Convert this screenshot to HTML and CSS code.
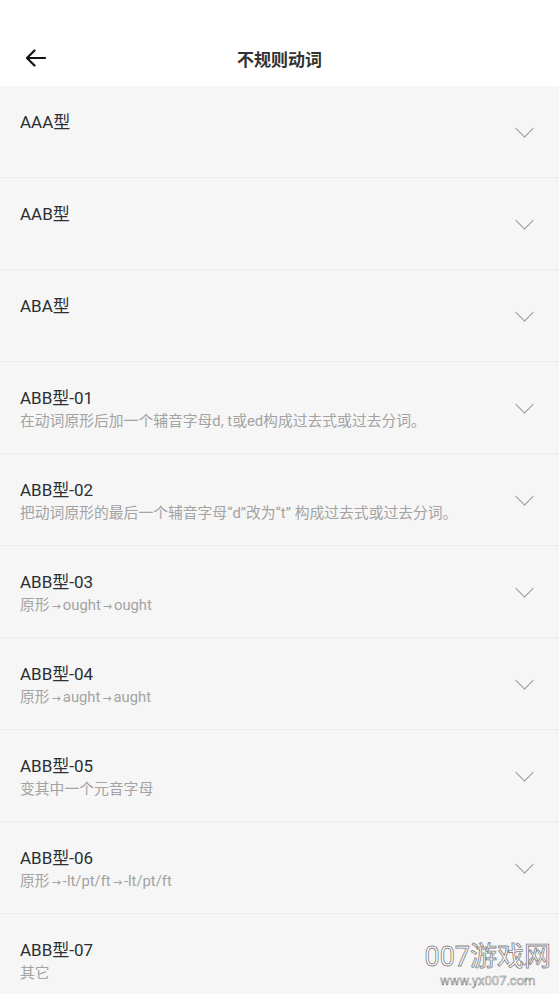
FILE: index.html
```html
<!DOCTYPE html>
<html>
<head>
  <title>不规则动词</title>
  <meta charset="utf-8" /><meta name="viewport" content="width=device-width, initial-scale=1.0" />
  <link rel="stylesheet" href="styles.css">
</head>
<body>

<!--top bar-->
<header class="bar">
  <a class="back" href="#">
    <svg width="22" height="20" viewBox="0 0 22 20"><path d="M21 10H3M10.5 2.5L3 10l7.5 7.5" fill="none" stroke="#111" stroke-width="2.2" stroke-linecap="round" stroke-linejoin="round"/></svg>
  </a>
  <h1>不规则动词</h1>
</header>

<!--verb groups-->
<ul class="list">
  <li><div class="txt"><h2>AAA型</h2></div><i class="chev"></i></li>
  <li><div class="txt"><h2>AAB型</h2></div><i class="chev"></i></li>
  <li><div class="txt"><h2>ABA型</h2></div><i class="chev"></i></li>
  <li><div class="txt"><h2>ABB型-01</h2><p>在动词原形后加一个辅音字母d, t或ed构成过去式或过去分词。</p></div><i class="chev"></i></li>
  <li><div class="txt"><h2>ABB型-02</h2><p>把动词原形的最后一个辅音字母“d”改为“t” 构成过去式或过去分词。</p></div><i class="chev"></i></li>
  <li><div class="txt"><h2>ABB型-03</h2><p>原形<span class="arr">→</span>ought<span class="arr">→</span>ought</p></div><i class="chev"></i></li>
  <li><div class="txt"><h2>ABB型-04</h2><p>原形<span class="arr">→</span>aught<span class="arr">→</span>aught</p></div><i class="chev"></i></li>
  <li><div class="txt"><h2>ABB型-05</h2><p>变其中一个元音字母</p></div><i class="chev"></i></li>
  <li><div class="txt"><h2>ABB型-06</h2><p>原形<span class="arr">→</span>-lt/pt/ft<span class="arr">→</span>-lt/pt/ft</p></div><i class="chev"></i></li>
  <li><div class="txt"><h2>ABB型-07</h2><p>其它</p></div><i class="chev"></i></li>
</ul>

<div class="mark">
  <span class="big">007游戏网</span>
  <span class="small">www.yx007.com</span>
</div>

</body>
</html>
```

FILE: styles.css
```css
body {
  margin: 0;
  padding: 0;
  background: #f6f6f6;
  font-family: 'Roboto', 'Noto Sans CJK SC', sans-serif;
  color: #2b2f33;
  overflow: hidden;
}

.bar {
  height: 56px;
  padding-top: 30px;
  background: #fff;
  display: flex;
  align-items: center;
  justify-content: center;
  position: relative;
}
.bar h1 {
  margin: 0;
  font-size: 17px;
  font-weight: bold;
  color: #333;
}
.back {
  position: absolute;
  left: 24px;
  top: 48px;
  line-height: 0;
}

.list {
  list-style: none;
  margin: 0;
  padding: 0;
}
.list li {
  height: 91px;
  border-bottom: 1px solid #ebebeb;
  display: flex;
  align-items: flex-start;
  padding: 0 20px;
}
.txt {
  flex: 1;
  padding-top: 25px;
}
.txt h2 {
  margin: 0;
  font-size: 17px;
  font-weight: normal;
  line-height: 22px;
  color: #2b2f33;
}
.txt p {
  margin: 2px 0 0;
  font-size: 14.8px;
  line-height: 20px;
  color: #a3a3a3;
}
.arr {
  font-family: 'DejaVu Sans', sans-serif;
  font-size: 11px;
  margin: 0 2px;
}
.chev {
  width: 12px;
  height: 12px;
  border-right: 1.6px solid #9a9a9a;
  border-bottom: 1.6px solid #9a9a9a;
  transform: rotate(45deg);
  margin-top: 36px;
  margin-right: 8px;
}

.mark {
  position: absolute;
  right: 8px;
  top: 940px;
  display: flex;
  flex-direction: column;
  align-items: center;
  color: #fff;
  -webkit-text-stroke: 0.8px #808080;
}
.mark .big {
  font-size: 27px;
  line-height: 34px;
}
.mark .small {
  font-size: 13px;
  line-height: 14px;
  -webkit-text-stroke: 0.5px #808080;
}
```
